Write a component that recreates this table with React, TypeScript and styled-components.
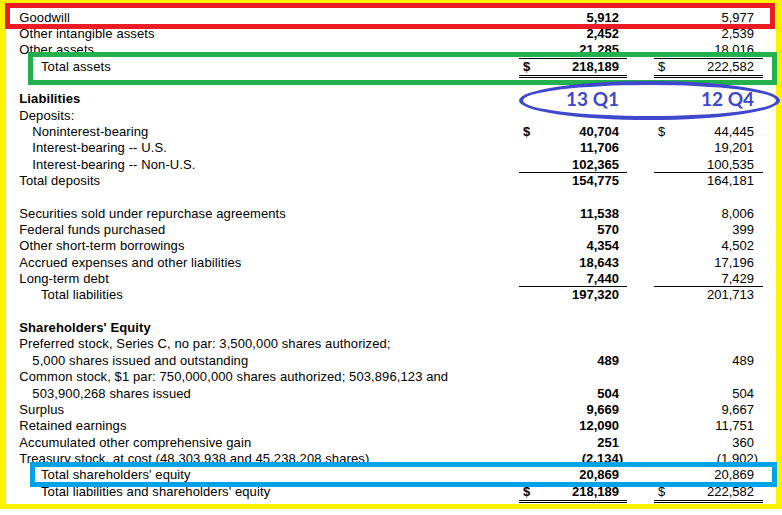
import React from 'react';
import styled, { createGlobalStyle } from 'styled-components';

const ROW_H = 16.35;

const colors = {
  yellow: '#fff200',
  red: '#ed1c24',
  green: '#22b14c',
  cyan: '#00a2e8',
  indigo: '#3f48cc',
  ink: '#000000',
};

type Line = {
  label?: string;
  indent?: 0 | 1 | 2;
  heading?: boolean;
  q1?: string;
  q4?: string;
  dollar?: boolean;
  above?: boolean;
  below?: boolean;
};

const lines: Line[] = [
  { label: 'Goodwill', q1: '5,912', q4: '5,977' },
  { label: 'Other intangible assets', q1: '2,452', q4: '2,539' },
  { label: 'Other assets', q1: '21,285', q4: '18,016' },
  { label: 'Total assets', indent: 2, q1: '218,189', q4: '222,582', dollar: true, above: true, below: true },
  {},
  { label: 'Liabilities', heading: true },
  { label: 'Deposits:' },
  { label: 'Noninterest-bearing', indent: 1, q1: '40,704', q4: '44,445', dollar: true },
  { label: 'Interest-bearing -- U.S.', indent: 1, q1: '11,706', q4: '19,201' },
  { label: 'Interest-bearing -- Non-U.S.', indent: 1, q1: '102,365', q4: '100,535' },
  { label: 'Total deposits', q1: '154,775', q4: '164,181', above: true },
  {},
  { label: 'Securities sold under repurchase agreements', q1: '11,538', q4: '8,006' },
  { label: 'Federal funds purchased', q1: '570', q4: '399' },
  { label: 'Other short-term borrowings', q1: '4,354', q4: '4,502' },
  { label: 'Accrued expenses and other liabilities', q1: '18,643', q4: '17,196' },
  { label: 'Long-term debt', q1: '7,440', q4: '7,429' },
  { label: 'Total liabilities', indent: 2, q1: '197,320', q4: '201,713', above: true },
  {},
  { label: "Shareholders' Equity", heading: true },
  { label: 'Preferred stock, Series C, no par: 3,500,000 shares authorized;' },
  { label: '5,000 shares issued and outstanding', indent: 1, q1: '489', q4: '489' },
  { label: 'Common stock, $1 par: 750,000,000 shares authorized; 503,896,123 and' },
  { label: '503,900,268 shares issued', indent: 1, q1: '504', q4: '504' },
  { label: 'Surplus', q1: '9,669', q4: '9,667' },
  { label: 'Retained earnings', q1: '12,090', q4: '11,751' },
  { label: 'Accumulated other comprehensive gain', q1: '251', q4: '360' },
  { label: 'Treasury stock, at cost (48,303,938 and 45,238,208 shares)', q1: '(2,134)', q4: '(1,902)' },
  { label: "Total shareholders' equity", indent: 2, q1: '20,869', q4: '20,869', above: true },
  { label: "Total liabilities and shareholders' equity", indent: 2, q1: '218,189', q4: '222,582', dollar: true, below: true },
];

const GlobalStyle = createGlobalStyle`
  html, body {
    margin: 0;
    padding: 0;
    background: #fff;
  }
  body {
    font-family: 'Liberation Sans', Arial, sans-serif;
    color: ${colors.ink};
  }
`;

const Page = styled.div`
  position: relative;
  width: 782px;
  height: 515px;
  background: #fff;
  overflow: hidden;
`;

const Frame = styled.div`
  box-sizing: border-box;
  height: 509px;
  border-style: solid;
  border-color: ${colors.yellow};
  border-width: 3px 6px 5px 6px;
  padding: 6.6px 13px 0 13.3px;
`;

const Statement = styled.div`
  display: flex;
  flex-direction: column;
`;

const Row = styled.div`
  display: grid;
  grid-template-columns: 1fr 108px 109px;
  column-gap: 27px;
  align-items: start;
  height: ${ROW_H}px;
  font-size: 13px;
  line-height: ${ROW_H}px;
`;

const Label = styled.div<{ $indent: number; $heading?: boolean }>`
  padding-left: ${(p) => [0, 13, 21.7][p.$indent]}px;
  font-weight: ${(p) => (p.$heading ? 700 : 400)};
  letter-spacing: 0.1px;
  white-space: nowrap;
`;

const Amount = styled.div<{ $bold?: boolean; $right: number; $above?: boolean; $below?: boolean }>`
  display: flex;
  justify-content: space-between;
  height: ${ROW_H}px;
  padding: 0 ${(p) => p.$right}px 0 4px;
  margin-top: ${(p) => (p.$above ? -1 : 0)}px;
  border-top: ${(p) => (p.$above ? `1px solid ${colors.ink}` : 'none')};
  border-bottom: ${(p) => (p.$below ? `3px double ${colors.ink}` : 'none')};
  font-weight: ${(p) => (p.$bold ? 700 : 400)};
  white-space: nowrap;
`;

const Figure = styled.span`
  margin-left: auto;
`;

const Paren = styled.span`
  margin-right: -4px;
`;

const Quarter = styled.span`
  margin-left: auto;
  font-family: Lato, 'Open Sans', sans-serif;
  font-weight: 700;
  font-size: 19px;
  color: ${colors.indigo};
`;

const Box = styled.div<{ $x: number; $y: number; $w: number; $h: number; $color: string }>`
  position: absolute;
  left: ${(p) => p.$x}px;
  top: ${(p) => p.$y}px;
  width: ${(p) => p.$w}px;
  height: ${(p) => p.$h}px;
  box-sizing: border-box;
  border: 5px solid ${(p) => p.$color};
  pointer-events: none;
`;

const Ring = styled(Box)`
  border-width: 4.5px;
  border-radius: 50%;
`;

const renderValue = (v: string) =>
  v.startsWith('(') ? (
    <Figure>
      {v.slice(0, -1)}
      <Paren>)</Paren>
    </Figure>
  ) : (
    <Figure>{v}</Figure>
  );

const StatementRow: React.FC<{ line: Line; header?: boolean }> = ({ line, header }) => (
  <Row>
    <Label $indent={line.indent ?? 0} $heading={line.heading}>
      {line.label ?? ''}
    </Label>
    <Amount $bold $right={8} $above={line.above} $below={line.below}>
      {line.dollar && <span>$</span>}
      {header && <Quarter>13 Q1</Quarter>}
      {line.q1 && renderValue(line.q1)}
    </Amount>
    <Amount $right={9} $above={line.above} $below={line.below}>
      {line.dollar && <span>$</span>}
      {header && <Quarter>12 Q4</Quarter>}
      {line.q4 && renderValue(line.q4)}
    </Amount>
  </Row>
);

const App: React.FC = () => (
  <Page>
    <GlobalStyle />
    <Frame>
      <Statement>
        {lines.map((line, i) => (
          <StatementRow key={i} line={line} header={line.label === 'Liabilities'} />
        ))}
      </Statement>
    </Frame>
    <Box $x={5} $y={3} $w={770} $h={26} $color={colors.red} />
    <Box $x={28} $y={52} $w={749} $h={33} $color={colors.green} />
    <Ring $x={519} $y={81} $w={261} $h={39} $color={colors.indigo} />
    <Box $x={30} $y={462} $w={747} $h={25} $color={colors.cyan} />
  </Page>
);

export default App;
